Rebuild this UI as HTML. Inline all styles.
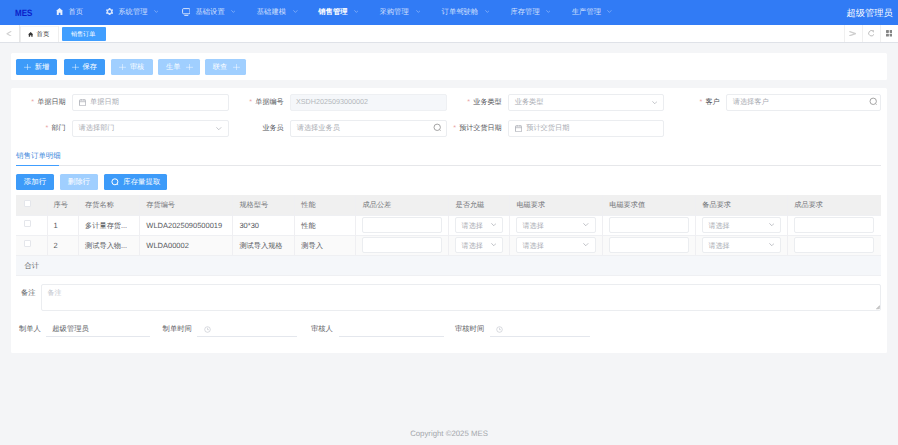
<!DOCTYPE html>
<html><head><meta charset="utf-8">
<style>
*{box-sizing:border-box;margin:0;padding:0}
html,body{width:898px;height:445px;overflow:hidden;background:#f4f5f7;font-family:"Liberation Sans",sans-serif;color:#606266;text-rendering:geometricPrecision}
.a{position:absolute;white-space:nowrap}
#nav{position:absolute;left:0;top:0;width:898px;height:24.5px;background:#317bf5}
.nt{position:absolute;top:0.3px;line-height:24px;font-size:7.3px;color:rgba(255,255,255,.78)}
.chev{position:absolute;top:10.4px;width:4.8px;height:2.8px}
#tags{position:absolute;left:0;top:24.5px;width:898px;height:18px;background:#fff;border-bottom:1px solid #dfe2e8}
.card{position:absolute;background:#fff;border-radius:1.5px}
.btn{position:absolute;height:15.9px;border-radius:1.5px;color:#fff;font-size:7.2px;line-height:15.9px}
.bp{background:#3d9bf9}
.bd{background:#a0cfff}
.lbl{position:absolute;font-size:7.1px;line-height:17px;color:#505257;text-align:right}
.req{color:#e89a9a;margin-right:3.2px}
.inp{position:absolute;height:16.5px;border:1px solid #ebedf0;border-radius:2px;background:#fff;font-size:7.2px;line-height:14.5px;color:#a8abb2}
.ph{position:absolute;top:0}
table{position:absolute;border-collapse:collapse;table-layout:fixed}
td,th{border:0.6px solid #ebeef5;font-size:7.2px;font-weight:normal;text-align:left;color:#606266;padding:0 0 0 7px;white-space:nowrap;overflow:hidden}
th{background:#f0f0f0;color:#909399}
.ci{position:absolute;height:16.6px;border:1px solid #ebedf0;border-radius:2px;background:#fff;font-size:7.1px;color:#a8abb2;line-height:16.2px;padding-left:5.2px}
.cb{display:inline-block;width:7px;height:7px;border:0.8px solid #e4e6eb;border-radius:1px;background:#fff}
.ul{position:absolute;height:0;border-bottom:1px solid #e4e7ed}
.hl{height:0.7px;background:#eff0f3}
.vl{width:0.6px;background:#efeff2}
.th{font-size:7.2px;color:#707377}
.td{font-size:7.2px;color:#55575c}
.lat{font-size:7.5px}
</style></head><body>

<!-- NAV -->
<div id="nav">
  <div class="a" style="left:14.8px;top:0.7px;line-height:24px;font-size:9.2px;font-weight:bold;color:#0b20c8;transform:scaleX(0.87);transform-origin:0 0">MES</div>
  <svg class="a" style="left:55.8px;top:8.3px" width="7.2" height="6.9" viewBox="0 0 7.2 6.9"><path d="M3.6 0 L7.2 3.1 L6.4 3.1 L6.4 6.9 L4.4 6.9 L4.4 4.7 L2.8 4.7 L2.8 6.9 L0.8 6.9 L0.8 3.1 L0 3.1 Z" fill="rgba(255,255,255,.88)"/></svg>
  <div class="nt" style="left:68.5px">首页</div>
  <svg class="a" style="left:105.5px;top:8.1px" width="7.2" height="7.2" viewBox="0 0 10 10"><path fill="rgba(255,255,255,.8)" fill-rule="evenodd" d="M4 0h2l.4 1.4 1.3.7 1.4-.5 1 1.7-1.1 1v1.4l1.1 1-1 1.7-1.4-.5-1.3.7L6 10H4l-.4-1.4-1.3-.7-1.4.5-1-1.7 1.1-1V4.3L-.1 3.3l1-1.7 1.4.5 1.3-.7z M5 2.9a2.1 2.1 0 1 0 0 4.2a2.1 2.1 0 1 0 0-4.2z"/></svg>
  <div class="nt" style="left:118.3px">系统管理</div>
  <svg class="chev" style="left:153.5px" viewBox="0 0 5 3"><path d="M0.3 0.3 L2.5 2.6 L4.7 0.3" fill="none" stroke="rgba(255,255,255,.5)" stroke-width="0.7"/></svg>
  <svg class="a" style="left:181.8px;top:8px" width="8.6" height="8" viewBox="0 0 8.6 8"><rect x="0.6" y="0.6" width="7.4" height="5.2" rx="1" fill="none" stroke="rgba(255,255,255,.8)" stroke-width="1"/><path d="M2.3 7.4h4" stroke="rgba(255,255,255,.8)" stroke-width="1"/></svg>
  <div class="nt" style="left:195.5px">基础设置</div>
  <svg class="chev" style="left:230.5px" viewBox="0 0 5 3"><path d="M0.3 0.3 L2.5 2.6 L4.7 0.3" fill="none" stroke="rgba(255,255,255,.5)" stroke-width="0.7"/></svg>
  <div class="nt" style="left:256.8px">基础建模</div>
  <svg class="chev" style="left:292.9px" viewBox="0 0 5 3"><path d="M0.3 0.3 L2.5 2.6 L4.7 0.3" fill="none" stroke="rgba(255,255,255,.5)" stroke-width="0.7"/></svg>
  <div class="nt" style="left:318.3px;color:#fff;font-weight:bold">销售管理</div>
  <svg class="chev" style="left:353.5px" viewBox="0 0 5 3"><path d="M0.3 0.3 L2.5 2.6 L4.7 0.3" fill="none" stroke="rgba(255,255,255,.5)" stroke-width="0.7"/></svg>
  <div class="nt" style="left:379.5px">采购管理</div>
  <svg class="chev" style="left:415.5px" viewBox="0 0 5 3"><path d="M0.3 0.3 L2.5 2.6 L4.7 0.3" fill="none" stroke="rgba(255,255,255,.5)" stroke-width="0.7"/></svg>
  <div class="nt" style="left:441.6px">订单驾驶舱</div>
  <svg class="chev" style="left:484.5px" viewBox="0 0 5 3"><path d="M0.3 0.3 L2.5 2.6 L4.7 0.3" fill="none" stroke="rgba(255,255,255,.5)" stroke-width="0.7"/></svg>
  <div class="nt" style="left:510.5px">库存管理</div>
  <svg class="chev" style="left:545.5px" viewBox="0 0 5 3"><path d="M0.3 0.3 L2.5 2.6 L4.7 0.3" fill="none" stroke="rgba(255,255,255,.5)" stroke-width="0.7"/></svg>
  <div class="nt" style="left:571.8px">生产管理</div>
  <svg class="chev" style="left:607.3px" viewBox="0 0 5 3"><path d="M0.3 0.3 L2.5 2.6 L4.7 0.3" fill="none" stroke="rgba(255,255,255,.5)" stroke-width="0.7"/></svg>
  <div class="a" style="left:846.6px;top:0.6px;line-height:24px;font-size:9.25px;color:#fff">超级管理员</div>
</div>

<!-- TAGS -->
<div id="tags">
  <svg class="a" style="left:6.3px;top:6px" width="5.5" height="5.5" viewBox="0 0 5.5 5.5"><path d="M4.8 0.6 L1 2.75 L4.8 4.9" fill="none" stroke="#d2d2d2" stroke-width="1.2" stroke-linecap="round" stroke-linejoin="round"/></svg>
  <div class="a" style="left:19px;top:0;width:0.6px;height:17.5px;background:#e6e6e6"></div>
  <div class="a" style="left:20.3px;top:1.7px;width:38.5px;height:15.8px;border:0.6px solid #eeeeee;border-top-color:#f6f6f6;border-bottom:none"></div>
  <svg class="a" style="left:27.6px;top:7.6px" width="5.4" height="4.8" viewBox="0 0 5.4 4.8"><path d="M2.7 0 L5.4 2.5 L4.6 2.5 L4.6 4.8 L3.3 4.8 L3.3 3.3 L2.1 3.3 L2.1 4.8 L0.8 4.8 L0.8 2.5 L0 2.5 Z" fill="#333"/></svg>
  <div class="a" style="left:36.6px;top:1.2px;line-height:17.5px;font-size:6.4px;color:#333">首页</div>
  <div class="a" style="left:62.1px;top:2px;width:43.5px;height:14.2px;background:#409eff;border-radius:1px;color:#fff;font-size:6.1px;line-height:15.6px;padding-left:8.8px">销售订单</div>
  <div class="a" style="left:844px;top:0;width:0.6px;height:17.5px;background:#f0f0f0"></div>
  <div class="a" style="left:862px;top:0;width:0.6px;height:17.5px;background:#f0f0f0"></div>
  <div class="a" style="left:880px;top:0;width:0.6px;height:17.5px;background:#f0f0f0"></div>
  <svg class="a" style="left:848.5px;top:6.2px" width="7.5" height="5.4" viewBox="0 0 7.5 5.4"><path d="M0.8 0.7 L6.6 2.7 L0.8 4.7" fill="none" stroke="#cfcfcf" stroke-width="1.3" stroke-linejoin="round" stroke-linecap="round"/></svg>
  <svg class="a" style="left:867.8px;top:5.9px" width="6.6" height="6.8" viewBox="0 0 6.6 6.8"><path d="M5.2 1.3 A2.7 2.7 0 1 0 5.9 4.2" fill="none" stroke="#b8b8b8" stroke-width="0.9"/><path d="M4.3 0.6 L6 0.8 L5.6 2.4" fill="none" stroke="#b8b8b8" stroke-width="0.8"/></svg>
  <svg class="a" style="left:885.5px;top:5.7px" width="6.6" height="6.6" viewBox="0 0 6.6 6.6"><rect x="0" y="0" width="2.9" height="2.9" rx="0.6" fill="#858585"/><rect x="3.7" y="0" width="2.9" height="2.9" rx="0.6" fill="#858585"/><rect x="0" y="3.7" width="2.9" height="2.9" rx="0.6" fill="#858585"/><rect x="3.7" y="3.7" width="2.9" height="2.9" rx="0.6" fill="#858585"/></svg>
</div>

<!-- TOOLBAR CARD -->
<div class="card" style="left:11px;top:53.2px;width:876px;height:27px">
  <div class="btn bp" style="left:5px;top:5.8px;width:41px"><svg class="a" style="left:8.0px;top:4.9px" width="7" height="6.6" viewBox="0 0 7 6.6"><path d="M3.5 0v6.6M0 3.3h7" stroke="rgba(255,255,255,.85)" stroke-width="0.55"/></svg><span class="a" style="left:18.7px">新增</span></div>
  <div class="btn bp" style="left:52.8px;top:5.8px;width:41.2px"><svg class="a" style="left:8.3px;top:4.9px" width="7" height="6.6" viewBox="0 0 7 6.6"><path d="M3.5 0v6.6M0 3.3h7" stroke="rgba(255,255,255,.85)" stroke-width="0.55"/></svg><span class="a" style="left:18.7px">保存</span></div>
  <div class="btn bd" style="left:100.2px;top:5.8px;width:41.5px"><svg class="a" style="left:8.3px;top:4.9px" width="7" height="6.6" viewBox="0 0 7 6.6"><path d="M3.5 0v6.6M0 3.3h7" stroke="rgba(255,255,255,.85)" stroke-width="0.55"/></svg><span class="a" style="left:18.7px">审核</span></div>
  <div class="btn bd" style="left:147.2px;top:5.8px;width:41.6px"><span class="a" style="left:7.8px">生单</span><svg class="a" style="left:27.9px;top:4.9px" width="7" height="6.6" viewBox="0 0 7 6.6"><path d="M3.5 0v6.6M0 3.3h7" stroke="rgba(255,255,255,.85)" stroke-width="0.55"/></svg></div>
  <div class="btn bd" style="left:194px;top:5.8px;width:41px"><span class="a" style="left:7.8px">联查</span><svg class="a" style="left:27.9px;top:4.9px" width="7" height="6.6" viewBox="0 0 7 6.6"><path d="M3.5 0v6.6M0 3.3h7" stroke="rgba(255,255,255,.85)" stroke-width="0.55"/></svg></div>
</div>

<!-- MAIN CARD -->
<div class="card" style="left:11px;top:88.3px;width:876px;height:264.5px">
</div>

<div id="form">
  <!-- row1 -->
  <div class="lbl" style="left:19.2px;top:94.4px;width:46.5px"><span class="req">*</span>单据日期</div>
  <div class="inp" style="left:72.1px;top:94.2px;width:156.8px">
    <svg class="a" style="left:5.6px;top:3.4px" width="7.2" height="7.2" viewBox="0 0 7.2 7.2"><rect x="0.5" y="0.9" width="6.2" height="5.9" rx="0.4" fill="none" stroke="#a8abb2" stroke-width="0.8"/><path d="M0.5 2.7h6.2M2.2 0v1.6M5 0v1.6" stroke="#a8abb2" stroke-width="0.7"/></svg>
    <span class="ph" style="left:17px">单据日期</span>
  </div>
  <div class="lbl" style="left:237.2px;top:94.4px;width:46.5px"><span class="req">*</span>单据编号</div>
  <div class="inp" style="left:290.2px;top:94.2px;width:157.1px;background:#f5f7fa;border-color:#eef0f3"><span class="ph" style="left:4.8px;font-size:7.2px;color:#b4b7bc">XSDH2025093000002</span></div>
  <div class="lbl" style="left:455.2px;top:94.4px;width:46.5px"><span class="req">*</span>业务类型</div>
  <div class="inp" style="left:508.2px;top:94.2px;width:156.2px"><span class="ph" style="left:5.5px">业务类型</span>
    <svg class="a" style="left:142.6px;top:5.9px" width="5.6" height="3.2" viewBox="0 0 6 3.5"><path d="M0.3 0.3 L3 3 L5.7 0.3" fill="none" stroke="#a8abb2" stroke-width="0.75"/></svg></div>
  <div class="lbl" style="left:673.2px;top:94.4px;width:46.5px"><span class="req">*</span>客户</div>
  <div class="inp" style="left:726.2px;top:94.2px;width:155.2px"><span class="ph" style="left:5.5px">请选择客户</span>
    <svg class="a" style="left:141.7px;top:2.3px" width="9" height="9" viewBox="0 0 9 9"><circle cx="4.2" cy="4.3" r="3.2" fill="none" stroke="#9a9a9a" stroke-width="0.9"/><path d="M6.6 6.7 L7.6 7.7" stroke="#9a9a9a" stroke-width="0.8"/></svg></div>
  <!-- row2 -->
  <div class="lbl" style="left:19.2px;top:120px;width:46.5px"><span class="req">*</span>部门</div>
  <div class="inp" style="left:72.1px;top:120.2px;width:156.8px"><span class="ph" style="left:5.5px">请选择部门</span>
    <svg class="a" style="left:143.2px;top:5.9px" width="5.6" height="3.2" viewBox="0 0 6 3.5"><path d="M0.3 0.3 L3 3 L5.7 0.3" fill="none" stroke="#a8abb2" stroke-width="0.75"/></svg></div>
  <div class="lbl" style="left:237.2px;top:120px;width:46.5px">业务员</div>
  <div class="inp" style="left:290.2px;top:120.2px;width:157.1px"><span class="ph" style="left:5.5px">请选择业务员</span>
    <svg class="a" style="left:141.7px;top:2.3px" width="9" height="9" viewBox="0 0 9 9"><circle cx="4.2" cy="4.3" r="3.2" fill="none" stroke="#9a9a9a" stroke-width="0.9"/><path d="M6.6 6.7 L7.6 7.7" stroke="#9a9a9a" stroke-width="0.8"/></svg></div>
  <div class="lbl" style="left:449.2px;top:120px;width:52.5px"><span class="req">*</span>预计交货日期</div>
  <div class="inp" style="left:508.2px;top:120.2px;width:156.2px">
    <svg class="a" style="left:5.6px;top:3.4px" width="7.2" height="7.2" viewBox="0 0 7.2 7.2"><rect x="0.5" y="0.9" width="6.2" height="5.9" rx="0.4" fill="none" stroke="#a8abb2" stroke-width="0.8"/><path d="M0.5 2.7h6.2M2.2 0v1.6M5 0v1.6" stroke="#a8abb2" stroke-width="0.7"/></svg>
    <span class="ph" style="left:17px">预计交货日期</span></div>
</div>

<!-- detail tab -->
<div class="a" style="left:16.1px;top:150.3px;line-height:12px;font-size:7.45px;color:#4189dc">销售订单明细</div>
<div class="a" style="left:16.1px;top:165px;width:865px;height:0.7px;background:#e6e7ea"></div>
<div class="a" style="left:16.1px;top:164.7px;width:42.8px;height:1.1px;background:#409eff"></div>

<div class="btn bp" style="left:16.1px;top:173.8px;width:37.7px;text-align:center;font-size:7.45px">添加行</div>
<div class="btn bd" style="left:60.2px;top:173.8px;width:37.4px;text-align:center;font-size:7.45px">删除行</div>
<div class="btn bp" style="left:104.4px;top:173.8px;width:62.6px">
  <svg class="a" style="left:7px;top:4.2px" width="8" height="8" viewBox="0 0 8 8"><circle cx="3.9" cy="3.8" r="3" fill="none" stroke="#fff" stroke-width="1"/><path d="M6 5.9 L7.2 7.1" stroke="#fff" stroke-width="0.8"/></svg>
  <span class="a" style="left:18.8px;font-size:7.45px">库存量提取</span></div>

<!-- TABLE -->
<div class="a" style="left:16.1px;top:195px;width:865.1px;height:20.3px;background:#f0f0f0"></div>
<div class="a" style="left:16.1px;top:215.3px;width:865.1px;height:19.7px;background:#fff"></div>
<div class="a" style="left:16.1px;top:235px;width:865.1px;height:20.1px;background:#fafafa"></div>
<div class="a" style="left:16.1px;top:255.1px;width:865.1px;height:20.1px;background:#f5f7fa"></div>
<div class="a hl" style="left:16.1px;top:214.8px;width:865.1px"></div>
<div class="a hl" style="left:16.1px;top:234.5px;width:865.1px"></div>
<div class="a hl" style="left:16.1px;top:254.6px;width:865.1px"></div>
<div class="a hl" style="left:16.1px;top:274.7px;width:865.1px"></div>
<div class="a vl" style="left:46.5px;top:195px;height:60.1px"></div>
<div class="a vl" style="left:78.0px;top:195px;height:60.1px"></div>
<div class="a vl" style="left:139.2px;top:195px;height:60.1px"></div>
<div class="a vl" style="left:232.3px;top:195px;height:60.1px"></div>
<div class="a vl" style="left:294.2px;top:195px;height:60.1px"></div>
<div class="a vl" style="left:355.4px;top:195px;height:60.1px"></div>
<div class="a vl" style="left:448.4px;top:195px;height:60.1px"></div>
<div class="a vl" style="left:509.3px;top:195px;height:60.1px"></div>
<div class="a vl" style="left:602.1px;top:195px;height:60.1px"></div>
<div class="a vl" style="left:695.2px;top:195px;height:60.1px"></div>
<div class="a vl" style="left:787.2px;top:195px;height:60.1px"></div>
<div class="a cb" style="left:24.0px;top:200.3px"></div>
<div class="a th" style="left:53.6px;top:195.3px;line-height:20.3px">序号</div>
<div class="a th" style="left:85.1px;top:195.3px;line-height:20.3px">存货名称</div>
<div class="a th" style="left:146.3px;top:195.3px;line-height:20.3px">存货编号</div>
<div class="a th" style="left:239.4px;top:195.3px;line-height:20.3px">规格型号</div>
<div class="a th" style="left:301.3px;top:195.3px;line-height:20.3px">性能</div>
<div class="a th" style="left:362.5px;top:195.3px;line-height:20.3px">成品公差</div>
<div class="a th" style="left:455.5px;top:195.3px;line-height:20.3px">是否允磁</div>
<div class="a th" style="left:516.4px;top:195.3px;line-height:20.3px">电磁要求</div>
<div class="a th" style="left:609.2px;top:195.3px;line-height:20.3px">电磁要求值</div>
<div class="a th" style="left:702.3px;top:195.3px;line-height:20.3px">备品要求</div>
<div class="a th" style="left:794.3px;top:195.3px;line-height:20.3px">成品要求</div>
<div class="a cb" style="left:24.0px;top:220.3px"></div>
<div class="a td lat" style="left:53.6px;top:216.0px;line-height:19.7px">1</div>
<div class="a td" style="left:85.1px;top:216.0px;line-height:19.7px">多计量存货...</div>
<div class="a td lat" style="left:146.3px;top:216.0px;line-height:19.7px">WLDA2025090500019</div>
<div class="a td lat" style="left:239.4px;top:216.0px;line-height:19.7px">30*30</div>
<div class="a td" style="left:301.3px;top:216.0px;line-height:19.7px">性能</div>
<div class="a ci" style="left:362.4px;top:216.8px;width:79.4px"></div>
<div class="a ci" style="left:455.4px;top:216.8px;width:48.1px">请选择<svg class="a" style="left:34.3px;top:5.6px" width="5.6" height="3.2" viewBox="0 0 6 3.5"><path d="M0.3 0.3 L3 3 L5.7 0.3" fill="none" stroke="#a8abb2" stroke-width="0.8"/></svg></div>
<div class="a ci" style="left:516.3px;top:216.8px;width:80.0px">请选择<svg class="a" style="left:66.2px;top:5.6px" width="5.6" height="3.2" viewBox="0 0 6 3.5"><path d="M0.3 0.3 L3 3 L5.7 0.3" fill="none" stroke="#a8abb2" stroke-width="0.8"/></svg></div>
<div class="a ci" style="left:609.1px;top:216.8px;width:79.5px"></div>
<div class="a ci" style="left:702.2px;top:216.8px;width:79.2px">请选择<svg class="a" style="left:65.4px;top:5.6px" width="5.6" height="3.2" viewBox="0 0 6 3.5"><path d="M0.3 0.3 L3 3 L5.7 0.3" fill="none" stroke="#a8abb2" stroke-width="0.8"/></svg></div>
<div class="a ci" style="left:794.2px;top:216.8px;width:80.1px"></div>
<div class="a cb" style="left:24.0px;top:240.2px"></div>
<div class="a td lat" style="left:53.6px;top:235.7px;line-height:20.1px">2</div>
<div class="a td" style="left:85.1px;top:235.7px;line-height:20.1px">测试导入物...</div>
<div class="a td lat" style="left:146.3px;top:235.7px;line-height:20.1px">WLDA00002</div>
<div class="a td" style="left:239.4px;top:235.7px;line-height:20.1px">测试导入规格</div>
<div class="a td" style="left:301.3px;top:235.7px;line-height:20.1px">测导入</div>
<div class="a ci" style="left:362.4px;top:236.8px;width:79.4px"></div>
<div class="a ci" style="left:455.4px;top:236.8px;width:48.1px">请选择<svg class="a" style="left:34.3px;top:5.6px" width="5.6" height="3.2" viewBox="0 0 6 3.5"><path d="M0.3 0.3 L3 3 L5.7 0.3" fill="none" stroke="#a8abb2" stroke-width="0.8"/></svg></div>
<div class="a ci" style="left:516.3px;top:236.8px;width:80.0px">请选择<svg class="a" style="left:66.2px;top:5.6px" width="5.6" height="3.2" viewBox="0 0 6 3.5"><path d="M0.3 0.3 L3 3 L5.7 0.3" fill="none" stroke="#a8abb2" stroke-width="0.8"/></svg></div>
<div class="a ci" style="left:609.1px;top:236.8px;width:79.5px"></div>
<div class="a ci" style="left:702.2px;top:236.8px;width:79.2px">请选择<svg class="a" style="left:65.4px;top:5.6px" width="5.6" height="3.2" viewBox="0 0 6 3.5"><path d="M0.3 0.3 L3 3 L5.7 0.3" fill="none" stroke="#a8abb2" stroke-width="0.8"/></svg></div>
<div class="a ci" style="left:794.2px;top:236.8px;width:80.1px"></div>
<div class="a td" style="left:24.6px;top:255.8px;line-height:20.1px;color:#606266">合计</div>
<!-- remarks -->
<div class="a" style="left:21px;top:284px;line-height:18px;font-size:7.3px;color:#606266">备注</div>
<div class="a" style="left:41.4px;top:284.2px;width:839.8px;height:26.8px;border:1px solid #ebedf0;border-radius:2px;background:#fff;font-size:7px;color:#c0c4cc;line-height:12px;padding-left:5.2px;padding-top:3px">备注
 <svg class="a" style="left:833.2px;top:20.2px" width="4.6" height="4.6" viewBox="0 0 5 5"><path d="M4.6 0.4 L0.4 4.6 M4.6 2.4 L2.4 4.6" stroke="#777" stroke-width="0.8"/></svg></div>
<!-- footer fields -->
<div class="a" style="left:19px;top:322px;line-height:14px;font-size:7.3px;color:#606266">制单人</div>
<div class="a" style="left:52.3px;top:322px;line-height:14px;font-size:7.3px;color:#606266">超级管理员</div>
<div class="ul" style="left:46.4px;top:336.3px;width:103.6px"></div>
<div class="a" style="left:162.6px;top:322px;line-height:14px;font-size:7.3px;color:#606266">制单时间</div>
<svg class="a" style="left:203.5px;top:325.5px" width="7" height="7" viewBox="0 0 8 8"><circle cx="4" cy="4" r="3.2" fill="none" stroke="#c0c4cc" stroke-width="0.7"/><path d="M4 2v2.2h1.6" fill="none" stroke="#c0c4cc" stroke-width="0.7"/></svg>
<div class="ul" style="left:196.9px;top:336.3px;width:100.1px"></div>
<div class="a" style="left:311px;top:322px;line-height:14px;font-size:7.3px;color:#606266">审核人</div>
<div class="ul" style="left:339.3px;top:336.3px;width:104.3px"></div>
<div class="a" style="left:455px;top:322px;line-height:14px;font-size:7.3px;color:#606266">审核时间</div>
<svg class="a" style="left:496.3px;top:325.5px" width="7" height="7" viewBox="0 0 8 8"><circle cx="4" cy="4" r="3.2" fill="none" stroke="#c0c4cc" stroke-width="0.7"/><path d="M4 2v2.2h1.6" fill="none" stroke="#c0c4cc" stroke-width="0.7"/></svg>
<div class="ul" style="left:490px;top:336.3px;width:99.6px"></div>

<div class="a" style="left:0;top:426.7px;width:898px;text-align:center;line-height:14px;font-size:7.8px;color:#a4a7ac;padding-left:0">Copyright ©2025 MES</div>
</body></html>
